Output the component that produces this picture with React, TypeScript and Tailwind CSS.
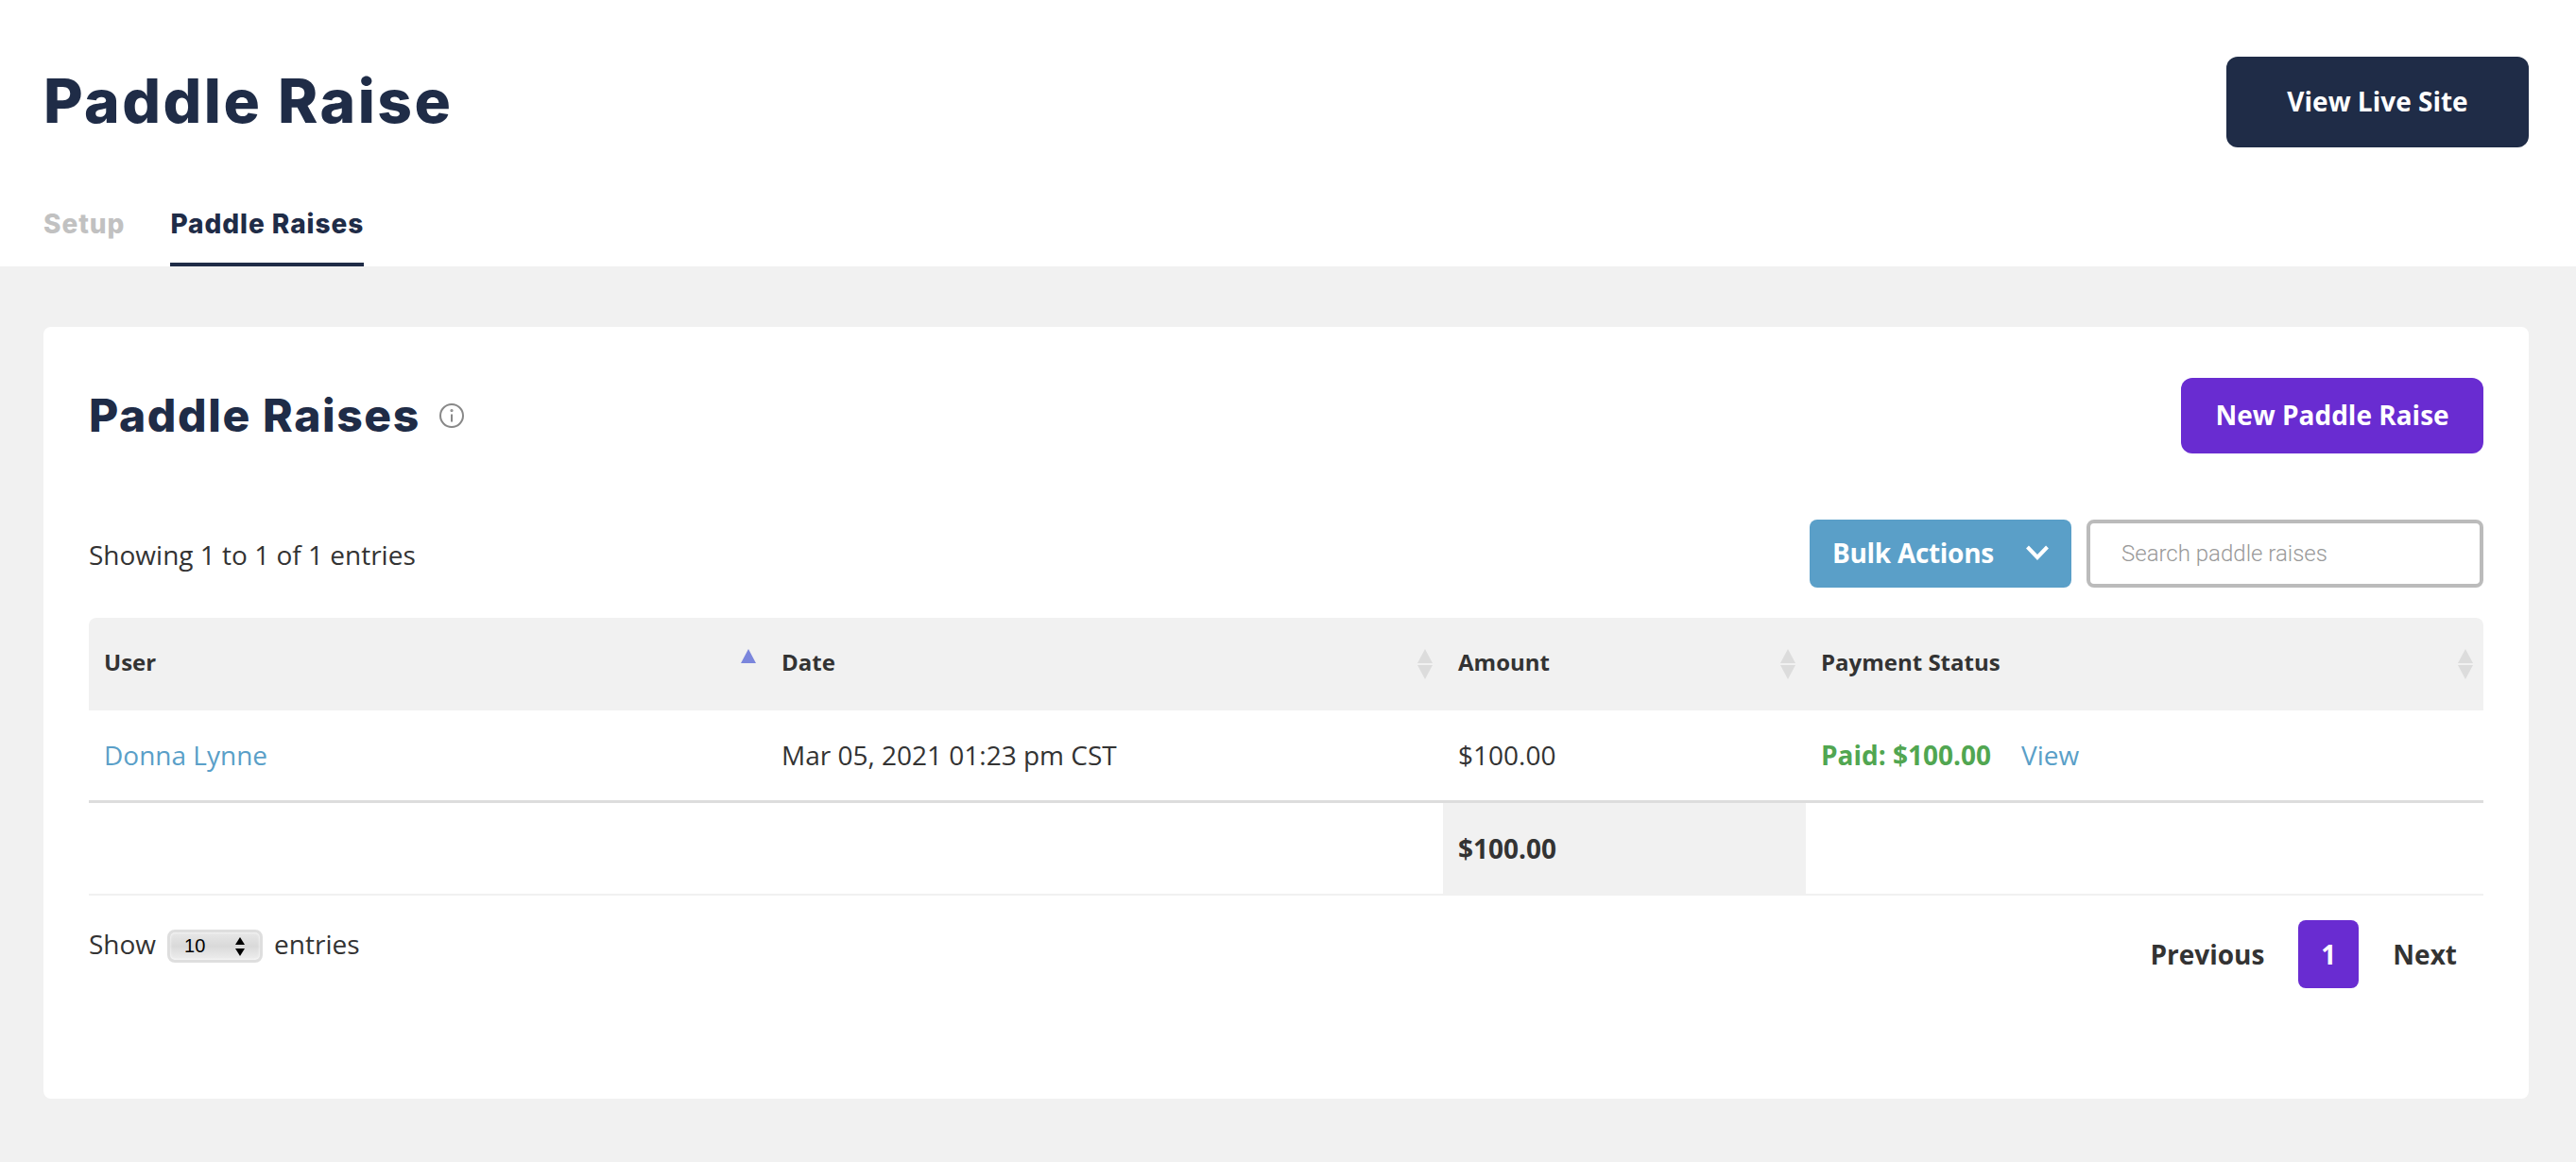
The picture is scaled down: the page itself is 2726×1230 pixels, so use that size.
import React from "react";

const heading = "font-['Inter','Liberation_Sans',sans-serif]";

function Sort({ active }: { active?: boolean }) {
  return (
    <svg className="absolute right-[10px] top-[33px]" width="18" height="32" viewBox="0 0 18 32">
      <path d="M9 0 L17 15 L1 15 Z" fill={active ? "#7b86dc" : "#dcdcdc"} />
      {!active && <path d="M1 17 L17 17 L9 32 Z" fill="#dcdcdc" />}
    </svg>
  );
}

function Th({ children, w, active, cls = "" }: { children: React.ReactNode; w: string; active?: boolean; cls?: string }) {
  return (
    <th className={`relative h-[98px] pl-[16px] pb-[5px] text-left align-middle text-[24px] font-bold text-[#333] ${w} ${cls}`}>
      {children}
      <Sort active={active} />
    </th>
  );
}

export default function App() {
  return (
    <div className="min-h-[1230px] bg-[#f1f1f1] font-['Open_Sans',sans-serif] text-[28px] text-[#333]">
      <header className="flex h-[282px] flex-col bg-white pr-[50px] pl-[46px]">
        <div className="flex items-start justify-between pt-[60px]">
          <h1 className={`${heading} pt-[7px] text-[64px] leading-[80px] font-extrabold tracking-[2.5px] text-[#1f2c47]`}>Paddle Raise</h1>
          <button className="flex h-[96px] w-[320px] items-center justify-center rounded-xl bg-[#1f2c47] pb-[2px] text-[28px] font-bold text-white">
            View Live Site
          </button>
        </div>
        <nav className={`${heading} mt-auto flex gap-[48px] text-[28px] leading-[34px] font-extrabold tracking-[0.95px]`}>
          <a className="pb-7 text-[#c1c1c1]">Setup</a>
          <a className="border-b-4 border-[#1f2c47] pb-6 text-[#1f2c47]">Paddle Raises</a>
        </nav>
      </header>

      <main className="mt-16 mr-[50px] ml-[46px] h-[817px] rounded-lg bg-white px-12 pt-[54px]">
        <div className="flex h-20 items-center justify-between">
          <div className="flex items-center gap-[20px]">
            <h2 className={`${heading} text-[48px] leading-none font-extrabold tracking-[1.6px] text-[#1f2c47]`}>Paddle Raises</h2>
            <svg width="26" height="26" viewBox="0 0 26 26" fill="none" stroke="#888" strokeWidth="2">
              <circle cx="13" cy="13" r="12" />
              <path d="M13 11.5v8" />
              <circle cx="13" cy="7.5" r="0.6" fill="#888" />
            </svg>
          </div>
          <button className="h-20 w-[320px] rounded-xl bg-[#692cd1] pb-[2px] text-[28px] font-bold text-white">New Paddle Raise</button>
        </div>

        <div className="mt-[70px] flex h-[72px] items-center justify-between">
          <span className="pt-[1px]">Showing 1 to 1 of 1 entries</span>
          <div className="flex gap-4">
            <button className="flex h-[72px] w-[277px] items-center justify-between rounded-lg bg-[#5a9fc8] pr-6 pb-[2px] pl-[24px] text-[28px] font-bold tracking-[-0.3px] text-white">
              Bulk Actions
              <svg width="24" height="16" viewBox="0 0 24 16" fill="none" stroke="#fff" strokeWidth="4">
                <path d="M1.5 2 L12 13 L22.5 2" />
              </svg>
            </button>
            <input
              placeholder="Search paddle raises"
              className="h-[72px] w-[420px] rounded-lg border-4 border-[#bbbbbb] bg-white pl-[33px] font-['Roboto',sans-serif] text-[24px] font-light placeholder:text-[#999999]"
            />
          </div>
        </div>

        <table className="mt-8 w-full table-fixed border-separate border-spacing-0">
          <thead className="bg-[#f1f1f1]">
            <tr>
              <Th w="w-[717px]" active cls="rounded-tl-lg">User</Th>
              <Th w="w-[716px]">Date</Th>
              <Th w="w-[384px]">Amount</Th>
              <Th w="w-[717px]" cls="rounded-tr-lg">Payment Status</Th>
            </tr>
          </thead>
          <tbody>
            <tr>
              <td className="h-[98px] border-b-[3px] border-[#dddddd] pb-[2px] pl-[16px] text-[#5a9fc8]">Donna Lynne</td>
              <td className="h-[98px] border-b-[3px] border-[#dddddd] pb-[2px] pl-[16px]">Mar 05, 2021 01:23 pm CST</td>
              <td className="h-[98px] border-b-[3px] border-[#dddddd] pb-[2px] pl-[16px]">$100.00</td>
              <td className="h-[98px] border-b-[3px] border-[#dddddd] pb-[2px] pl-[16px]">
                <span className="font-bold text-[#51a651]">Paid: $100.00</span>
                <span className="ml-[32px] text-[#5a9fc8]">View</span>
              </td>
            </tr>
          </tbody>
          <tfoot>
            <tr>
              <td className="h-[98px] border-b-2 border-[#f1f1f1]"></td>
              <td className="h-[98px] border-b-2 border-[#f1f1f1]"></td>
              <td className="h-[98px] border-b-2 border-[#f1f1f1] bg-[#f1f1f1] pl-[16px] font-bold">$100.00</td>
              <td className="h-[98px] border-b-2 border-[#f1f1f1]"></td>
            </tr>
          </tfoot>
        </table>

        <div className="mt-[26px] flex items-start justify-between">
          <div className="flex h-[50px] items-center">
            <span>Show</span>
            <div className="relative mx-[12px] mt-1 flex h-[35px] w-[101px] items-center rounded-[8px] border-[3px] border-[#dedede] bg-gradient-to-b from-[#e8e8e8] via-[#d9d9d9] to-[#eeeeee] pl-[15px] font-['Liberation_Sans',sans-serif] text-[20px] text-black shadow-[inset_0_0_3px_#ffffff]">
              10
              <svg className="absolute top-[5px] right-[15px]" width="12" height="20" viewBox="0 0 12 20" fill="#000">
                <path d="M6 0 L11 8 L1 8 Z M1 12 L11 12 L6 20 Z" />
              </svg>
            </div>
            <span>entries</span>
          </div>
          <div className="flex h-[72px] items-center font-bold">
            <span>Previous</span>
            <span className="mx-[36px] flex h-[72px] w-16 items-center justify-center rounded-lg bg-[#692cd1] text-white">1</span>
            <span className="mr-[28px]">Next</span>
          </div>
        </div>
      </main>
    </div>
  );
}
